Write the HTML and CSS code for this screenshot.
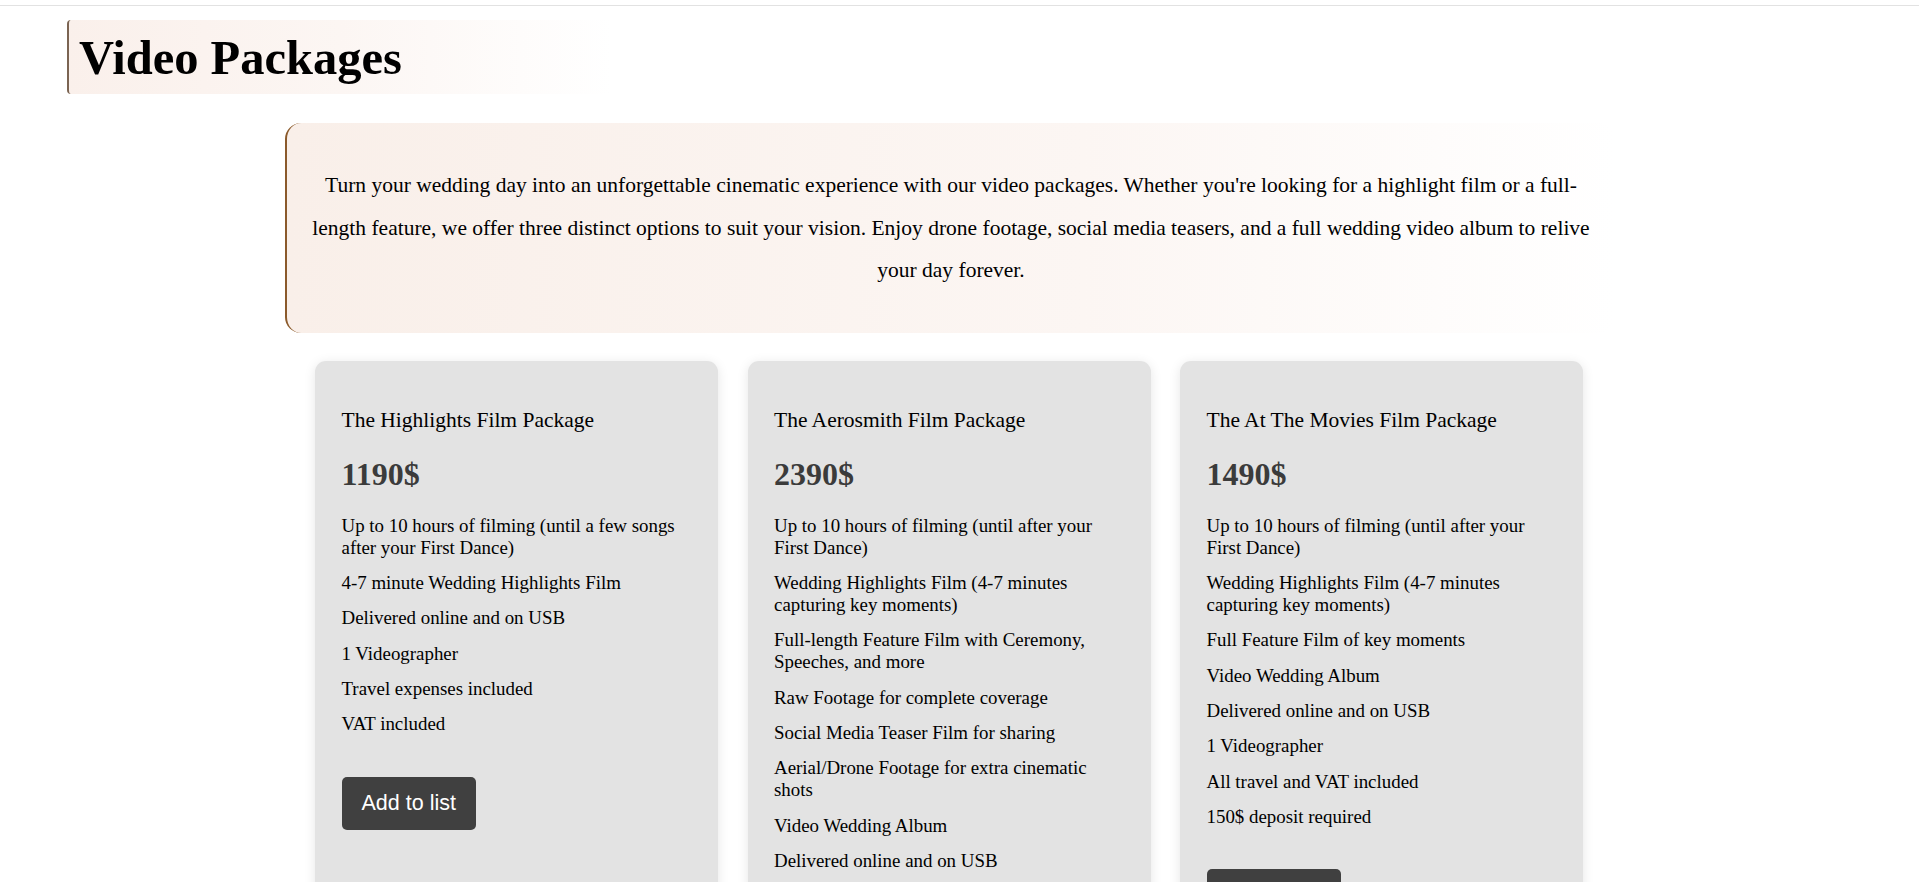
FILE: index.html
```html
<!DOCTYPE html>
<html lang="en">
<head>
<meta charset="utf-8">
<title>Video Packages</title>
<link rel="stylesheet" href="styles.css">
</head>
<body>
<div class="topline"></div>
<main class="page">
  <h1 class="section-title">Video Packages</h1>
  <div class="intro">
    <p>Turn your wedding day into an unforgettable cinematic experience with our video packages. Whether you're looking for a highlight film or a full-length feature, we offer three distinct options to suit your vision. Enjoy drone footage, social media teasers, and a full wedding video album to relive your day forever.</p>
  </div>
  <div class="cards">
    <div class="card">
      <h3 class="card-title">The Highlights Film Package</h3>
      <div class="price">1190$</div>
      <ul class="features">
        <li>Up to 10 hours of filming (until a few songs after your First Dance)</li>
        <li>4-7 minute Wedding Highlights Film</li>
        <li>Delivered online and on USB</li>
        <li>1 Videographer</li>
        <li>Travel expenses included</li>
        <li>VAT included</li>
      </ul>
      <button class="add-btn">Add to list</button>
    </div>
    <div class="card">
      <h3 class="card-title">The Aerosmith Film Package</h3>
      <div class="price">2390$</div>
      <ul class="features">
        <li>Up to 10 hours of filming (until after your First Dance)</li>
        <li>Wedding Highlights Film (4-7 minutes capturing key moments)</li>
        <li>Full-length Feature Film with Ceremony, Speeches, and more</li>
        <li>Raw Footage for complete coverage</li>
        <li>Social Media Teaser Film for sharing</li>
        <li>Aerial/Drone Footage for extra cinematic shots</li>
        <li>Video Wedding Album</li>
        <li>Delivered online and on USB</li>
        <li>2 Videographers</li>
        <li>All travel and VAT included</li>
        <li>150$ deposit required</li>
      </ul>
      <button class="add-btn">Add to list</button>
    </div>
    <div class="card">
      <h3 class="card-title">The At The Movies Film Package</h3>
      <div class="price">1490$</div>
      <ul class="features">
        <li>Up to 10 hours of filming (until after your First Dance)</li>
        <li>Wedding Highlights Film (4-7 minutes capturing key moments)</li>
        <li>Full Feature Film of key moments</li>
        <li>Video Wedding Album</li>
        <li>Delivered online and on USB</li>
        <li>1 Videographer</li>
        <li>All travel and VAT included</li>
        <li>150$ deposit required</li>
      </ul>
      <button class="add-btn">Add to list</button>
    </div>
  </div>
</main>
</body>
</html>
```

FILE: styles.css
```css
html {
  overflow-y: scroll;
}

html, body {
  margin: 0;
  padding: 0;
  background: #ffffff;
}

html::-webkit-scrollbar {
  width: 22px;
  background: #f9f9f9;
}

html::-webkit-scrollbar-thumb {
  background: #888888;
  border-radius: 8px;
  border: 5px solid #f9f9f9;
}

body {
  font-family: "Liberation Serif", "Times New Roman", serif;
  color: #000;
}

.topline {
  height: 5px;
  border-bottom: 1px solid #e2e2e2;
}

.page {
  padding: 0 0 60px 67px;
}

.section-title {
  margin: 14px 0 0 0;
  width: 545px;
  box-sizing: border-box;
  padding: 9.5px 12px 9.5px 10px;
  font-size: 48.5px;
  font-weight: bold;
  line-height: normal;
  border-left: 2px solid #7b6452;
  border-radius: 4px;
  background: linear-gradient(90deg, #faf0eb 0%, #fcf6f3 50%, #ffffff 100%);
}

.intro {
  width: 1330px;
  box-sizing: border-box;
  margin: 28.5px 0 0 218px;
  padding: 20px 20px;
  border-left: 2px solid #8b5a2b;
  border-radius: 16px;
  background: linear-gradient(90deg, #f9efe9 0%, #fcf6f3 60%, #ffffff 100%);
}

.intro p {
  margin: 21.5px 0;
  font-size: 21.5px;
  line-height: 42.5px;
  text-align: center;
}

.cards {
  display: flex;
  gap: 29.5px;
  margin: 28px 0 0 248px;
  align-items: stretch;
}

.card {
  width: 403px;
  box-sizing: border-box;
  padding: 26px 26px 40px 26.5px;
  background: #e3e3e3;
  border-radius: 11px;
  box-shadow: 0 2px 12px rgba(0, 0, 0, 0.1);
}

.card-title {
  margin: 21px 0 0 0;
  font-size: 21.5px;
  font-weight: normal;
  line-height: 25px;
}

.price {
  margin-top: 23px;
  font-size: 32px;
  font-weight: bold;
  line-height: 36px;
  color: #3b3b3b;
}

.features {
  list-style: none;
  margin: 22.5px 0 0 0;
  padding: 0;
  display: flex;
  flex-direction: column;
  gap: 13.35px;
}

.features li {
  font-size: 18.9px;
  line-height: 22px;
}

.add-btn {
  margin-top: 41.5px;
  padding: 14px 20px;
  font-family: "Liberation Sans", Arial, sans-serif;
  font-size: 21.5px;
  line-height: 25px;
  color: #ffffff;
  background: #404040;
  border: none;
  border-radius: 5px;
  cursor: pointer;
}
```
